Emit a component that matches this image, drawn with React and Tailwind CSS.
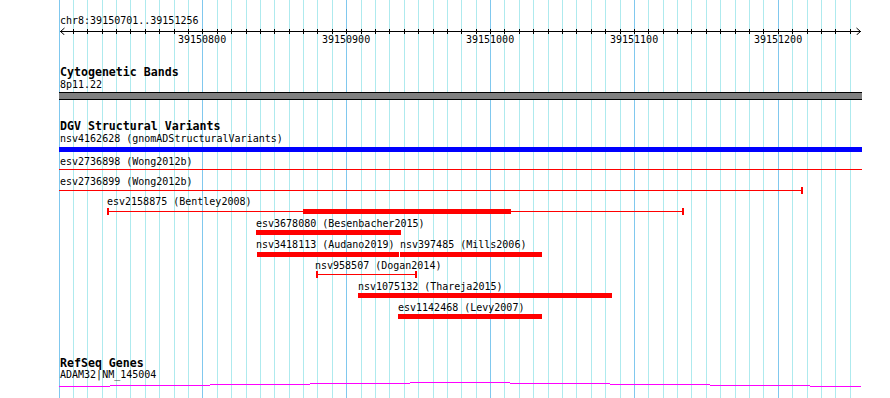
import React from 'react';

const X0 = 59;
const W = 803;
const STEP = 14.385;

const gridLines = Array.from({ length: 56 }, (_, k) => ({
  x: X0 + Math.floor(k * STEP),
  major: k % 10 === 0,
}));

const rulerLabels = [1, 2, 3, 4, 5].map((i) => ({
  x: X0 + Math.floor(i * 10 * STEP),
  text: String(39150700 + i * 100),
}));

// y values are relative to the strip under each row's label
const variantRows = [
  { h: 23, labels: [{ x: 60, text: 'nsv4162628 (gnomADStructuralVariants)' }], bars: [{ x1: 59, x2: 862, y: 3, h: 5, color: '#0000ff' }] },
  { h: 20, labels: [{ x: 60, text: 'esv2736898 (Wong2012b)' }], lines: [{ x1: 59, x2: 862, y: 2 }] },
  { h: 20, labels: [{ x: 60, text: 'esv2736899 (Wong2012b)' }], lines: [{ x1: 59, x2: 803, y: 3, capR: true }] },
  {
    h: 22,
    labels: [{ x: 107, text: 'esv2158875 (Bentley2008)' }],
    lines: [{ x1: 107, x2: 684, y: 4, capL: true, capR: true }],
    bars: [{ x1: 303, x2: 511, y: 2, h: 5 }],
  },
  { h: 21, labels: [{ x: 256, text: 'esv3678080 (Besenbacher2015)' }], bars: [{ x1: 256, x2: 401, y: 1, h: 5 }] },
  {
    h: 21,
    labels: [
      { x: 256, text: 'nsv3418113 (Audano2019)' },
      { x: 400, text: 'nsv397485 (Mills2006)' },
    ],
    bars: [
      { x1: 257, x2: 399, y: 2, h: 5 },
      { x1: 400, x2: 542, y: 2, h: 5 },
    ],
  },
  { h: 21, labels: [{ x: 315, text: 'nsv958507 (Dogan2014)' }], lines: [{ x1: 316, x2: 417, y: 3, capL: true, capR: true }] },
  { h: 21, labels: [{ x: 358, text: 'nsv1075132 (Thareja2015)' }], bars: [{ x1: 358, x2: 612, y: 1, h: 5 }] },
  { h: 21, labels: [{ x: 398, text: 'esv1142468 (Levy2007)' }], bars: [{ x1: 398, x2: 542, y: 1, h: 5 }] },
];

const geneSegments = [
  [59, 110, 6], [110, 210, 5], [210, 310, 4], [310, 410, 3], [410, 510, 2],
  [510, 610, 3], [610, 710, 4], [710, 810, 5], [810, 861, 6],
];

function Grid() {
  return (
    <svg className="absolute inset-0" width="890" height="398" shapeRendering="crispEdges">
      {gridLines.map((l) => (
        <rect key={l.x} x={l.x} y="0" width="1" height="398" fill={l.major ? '#80c8ee' : '#aeeaee'} />
      ))}
    </svg>
  );
}

function Ruler() {
  return (
    <div className="flex flex-col pt-[16px]">
      <div className="h-[10px] pl-[1px] leading-[10px] text-[10px]">chr8:39150701..39151256</div>
      <svg width={W} height="9" className="block">
        <rect x="1" y="5" width="801" height="1" fill="#000" shapeRendering="crispEdges" />
        {gridLines.slice(1).map((l) => (
          <rect key={l.x} x={l.x - X0} y="3" width="1" height="5" fill="#000" shapeRendering="crispEdges" />
        ))}
        <path d="M5.5 2 L1.5 5.5 L5.5 9" stroke="#000" fill="none" strokeWidth="1" />
        <path d="M797.5 2 L801.5 5.5 L797.5 9" stroke="#000" fill="none" strokeWidth="1" />
      </svg>
      <div className="relative h-[10px] text-[10px] leading-[10px]">
        {rulerLabels.map((r) => (
          <span key={r.text} className="absolute top-0" style={{ left: r.x - X0 - 24 }}>
            {r.text}
          </span>
        ))}
      </div>
    </div>
  );
}

function TrackTitle({ children, className = '' }) {
  return <div className={`h-[12px] pl-[1px] text-[11.6px] leading-[12px] font-bold ${className}`}>{children}</div>;
}

function VariantRow({ row }) {
  const stripH = row.h - 10;
  return (
    <div className="flex flex-col" style={{ height: row.h }}>
      <div className="relative h-[10px] text-[10px] leading-[10px]">
        {row.labels.map((l) => (
          <span key={l.text} className="absolute top-0 whitespace-nowrap" style={{ left: l.x - X0 }}>
            {l.text}
          </span>
        ))}
      </div>
      <svg width={W} height={stripH} className="block overflow-visible" shapeRendering="crispEdges">
        {(row.lines || []).map((ln, i) => (
          <g key={i} fill="#ff0000">
            <rect x={ln.x1 - X0} y={ln.y} width={ln.x2 - ln.x1} height="1" />
            {ln.capL && <rect x={ln.x1 - X0} y={ln.y - 3} width="2" height="7" />}
            {ln.capR && <rect x={ln.x2 - X0 - 2} y={ln.y - 3} width="2" height="7" />}
          </g>
        ))}
        {(row.bars || []).map((b, i) => (
          <rect key={i} x={b.x1 - X0} y={b.y} width={b.x2 - b.x1} height={b.h} fill={b.color || '#ff0000'} />
        ))}
      </svg>
    </div>
  );
}

export default function App() {
  return (
    <div className="relative w-[890px] h-[398px] overflow-hidden bg-white text-black font-['DejaVu_Sans_Mono',monospace]">
      <Grid />
      <div className="relative ml-[59px] flex w-[803px] flex-col">
        <Ruler />

        <TrackTitle className="mt-[21px]">Cytogenetic Bands</TrackTitle>
        <div className="mt-[2px] h-[10px] pl-[1px] text-[10px] leading-[10px]">8p11.22</div>
        <div className="mt-[2px] h-[8px] w-[803px] border-y border-black bg-[#808080]" />

        <TrackTitle className="mt-[20px]">DGV Structural Variants</TrackTitle>
        <div className="mt-[2px] flex flex-col">
          {variantRows.map((row, i) => (
            <VariantRow key={i} row={row} />
          ))}
        </div>

        <TrackTitle className="mt-[33px]">RefSeq Genes</TrackTitle>
        <div className="mt-[1px] h-[10px] pl-[1px] text-[10px] leading-[10px]">ADAM32|NM_145004</div>
        <svg width={W} height="8" className="block" shapeRendering="crispEdges">
          {geneSegments.map(([a, b, y]) => (
            <rect key={a} x={a - X0} y={y} width={b - a} height="1" fill="#ff00ff" />
          ))}
        </svg>
      </div>
    </div>
  );
}
